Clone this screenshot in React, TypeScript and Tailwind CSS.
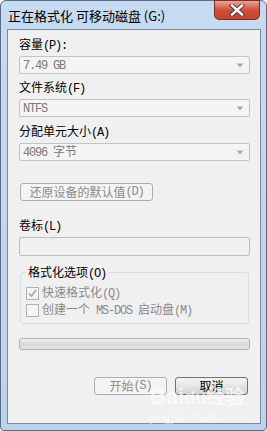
import React from "react";

function T({ s }: { s: string }) {
  const parts = s.split(/([\x20-\x7E]+)/).filter((p) => p.length > 0);
  return (
    <>
      {parts.map((p, i) =>
        /^[\x20-\x7E]+$/.test(p) ? (
          <span key={i} className="font-['Liberation_Mono'] tracking-[-1.2px]">
            {p}
          </span>
        ) : (
          <span key={i}>{p}</span>
        )
      )}
    </>
  );
}

function Arrow() {
  return (
    <svg width="8" height="5" viewBox="0 0 8 5" className="shrink-0">
      <path d="M0.5 0.5 L7.5 0.5 L4 4.5 Z" fill="#a8a8a8" />
    </svg>
  );
}

function Combo({ value }: { value: string }) {
  return (
    <div className="h-[18px] w-full rounded-[2px] border border-[#c3c3c3] bg-[#f4f4f4] flex items-center pl-[3px] pr-[5px] text-[#7a7a7a]">
      <div className="flex-1 leading-[14px]">
        <T s={value} />
      </div>
      <Arrow />
    </div>
  );
}

function Label({ s }: { s: string }) {
  return (
    <div className="h-[14px] leading-[14px] text-black">
      <T s={s} />
    </div>
  );
}

function CheckBox({ checked }: { checked?: boolean }) {
  return (
    <div className="w-[13px] h-[13px] border border-[#b1b1b1] bg-[#f4f4f4] flex items-center justify-center shrink-0">
      {checked && (
        <svg width="9" height="9" viewBox="0 0 9 9">
          <path d="M1 4.5 L3.5 7 L8 1" stroke="#a4a4a4" strokeWidth="1.6" fill="none" />
        </svg>
      )}
    </div>
  );
}

export default function App() {
  return (
    <div className="w-[267px] h-[431px] relative overflow-hidden font-['Noto_Sans_CJK_SC',sans-serif] text-[12px]">
      <div className="w-[267px] h-[431px] flex flex-col rounded-t-[6px] rounded-b-[4px] border border-[#5b6d84] bg-gradient-to-b from-[#c6dbf2] via-[#c1d7ee] to-[#bcd3ec]">
        {/* title bar */}
        <div className="h-[28px] flex items-center pl-[7px] relative shrink-0">
          <span className="text-[13px] leading-[16px] text-black mt-[1px]">
            正在格式化 可移动磁盘 (G:)
          </span>
          <div className="absolute right-[6px] top-[-1px] w-[46px] h-[20px] rounded-b-[5px] border border-[#7a2f24] bg-gradient-to-b from-[#e9a597] via-[#cf4c37] to-[#c8432d] flex items-center justify-center">
            <svg width="16" height="12" viewBox="0 0 16 12">
              <path d="M3 1.5 L13 10.5 M13 1.5 L3 10.5" stroke="#3a3a3a" strokeWidth="4.2" strokeLinecap="square" />
              <path d="M3 1.5 L13 10.5 M13 1.5 L3 10.5" stroke="#ffffff" strokeWidth="2.4" strokeLinecap="square" />
            </svg>
          </div>
        </div>
        {/* client area */}
        <div className="ml-[6px] mr-[5px] h-[395px] border border-[#7b8a9d] bg-[#f0f0f0] flex flex-col pl-[11px] pr-[10px] pt-[7px]">
          <Label s="容量(P):" />
          <div className="mt-[5px]">
            <Combo value="7.49 GB" />
          </div>
          <div className="mt-[6px]">
            <Label s="文件系统(F)" />
          </div>
          <div className="mt-[5px]">
            <Combo value="NTFS" />
          </div>
          <div className="mt-[7px]">
            <Label s="分配单元大小(A)" />
          </div>
          <div className="mt-[5px]">
            <Combo value="4096 字节" />
          </div>
          <div className="mt-[22px] ml-[1px] w-[133px] h-[18px] rounded-[3px] border border-[#adadad] bg-[#f4f4f4] flex items-center justify-center text-[#8a8a8a] leading-[14px]">
            <T s="还原设备的默认值(D)" />
          </div>
          <div className="mt-[17px]">
            <Label s="卷标(L)" />
          </div>
          <div className="mt-[5px] h-[19px] w-full rounded-[2px] border border-[#bdbdbd] bg-[#f0f0f0]" />
          <fieldset className="mt-[9px] mx-[1px] border border-[#d5dfe5] rounded-[3px] pl-[5px] pr-[5px] pb-[6px]">
            <legend className="px-[2px] h-[14px] leading-[14px] text-black">
              <T s="格式化选项(O)" />
            </legend>
            <div className="mt-[7px] flex items-center gap-[3px] h-[14px] leading-[14px] text-[#8a8a8a]">
              <CheckBox checked />
              <span>
                <T s="快速格式化(Q)" />
              </span>
            </div>
            <div className="mt-[3px] flex items-center gap-[3px] h-[14px] leading-[14px] text-[#8a8a8a]">
              <CheckBox />
              <span>
                <T s="创建一个 MS-DOS 启动盘(M)" />
              </span>
            </div>
          </fieldset>
          <div className="mt-[14px] h-[12px] w-full rounded-[3px] border border-[#b2b2b2] bg-gradient-to-b from-[#f3f3f3] via-[#d9d9d9] to-[#e4e4e4]" />
          <div className="mt-[27px] flex justify-end gap-[8px] pr-[2px]">
            <div className="w-[73px] h-[18px] rounded-[3px] border border-[#adadad] bg-[#f4f4f4] flex items-center justify-center text-[#8a8a8a] leading-[14px]">
              <T s="开始(S)" />
            </div>
            <div className="w-[73px] h-[18px] rounded-[3px] border border-[#707070] bg-gradient-to-b from-[#f2f2f2] via-[#e6e6e6] to-[#d2d2d2] flex items-center justify-center text-black leading-[14px]">
              <T s="取消" />
            </div>
          </div>
        </div>
      </div>
      {/* watermark */}
      <div className="absolute left-[150px] top-[384px] flex flex-col items-start pointer-events-none select-none">
        <span className="font-['Liberation_Sans',sans-serif] font-bold text-[22px] leading-[24px] text-white/70 tracking-[0px]">
          Bai<span className="text-[18px]">du</span>
          <span className="font-['Noto_Sans_CJK_SC',sans-serif] text-[19px]">经验</span>
        </span>
        <span className="font-['Liberation_Serif',serif] text-[13px] leading-[14px] text-white/60">
          jingyan.baidu.com
        </span>
      </div>
    </div>
  );
}
